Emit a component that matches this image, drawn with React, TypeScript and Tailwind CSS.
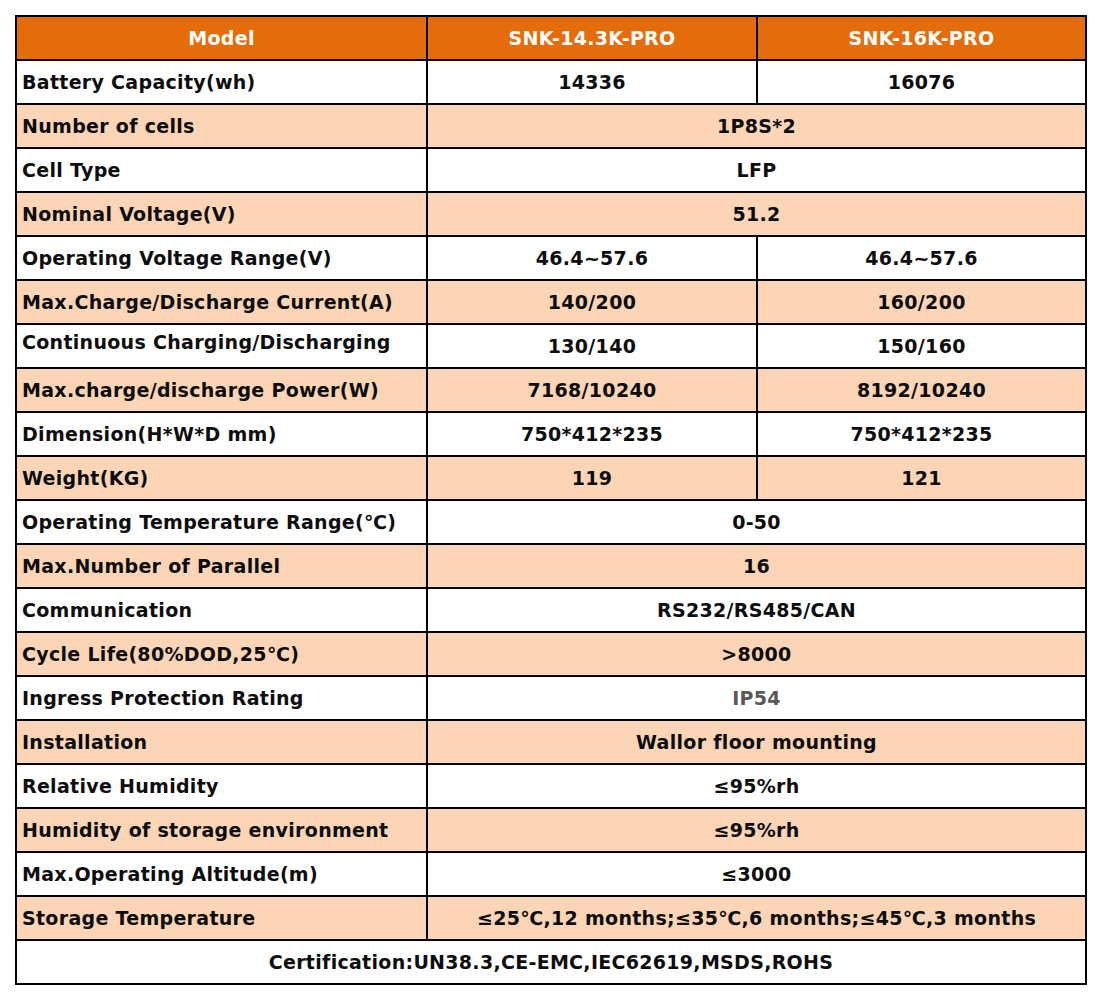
type SpecRow = {
  readonly label: string;
  readonly values: readonly string[];
  readonly muted?: boolean;
  readonly raised?: boolean;
};

const ROWS: readonly SpecRow[] = [
  { label: "Battery Capacity(wh)", values: ["14336", "16076"] },
  { label: "Number of cells", values: ["1P8S*2"] },
  { label: "Cell Type", values: ["LFP"] },
  { label: "Nominal Voltage(V)", values: ["51.2"] },
  { label: "Operating Voltage Range(V)", values: ["46.4~57.6", "46.4~57.6"] },
  { label: "Max.Charge/Discharge Current(A)", values: ["140/200", "160/200"] },
  { label: "Continuous Charging/Discharging", values: ["130/140", "150/160"], raised: true },
  { label: "Max.charge/discharge Power(W)", values: ["7168/10240", "8192/10240"] },
  { label: "Dimension(H*W*D mm)", values: ["750*412*235", "750*412*235"] },
  { label: "Weight(KG)", values: ["119", "121"] },
  { label: "Operating Temperature Range(℃)", values: ["0-50"] },
  { label: "Max.Number of Parallel", values: ["16"] },
  { label: "Communication", values: ["RS232/RS485/CAN"] },
  { label: "Cycle Life(80%DOD,25℃)", values: [">8000"] },
  { label: "Ingress Protection Rating", values: ["IP54"], muted: true },
  { label: "Installation", values: ["Wallor floor mounting"] },
  { label: "Relative Humidity", values: ["≤95%rh"] },
  { label: "Humidity of storage environment", values: ["≤95%rh"] },
  { label: "Max.Operating Altitude(m)", values: ["≤3000"] },
  { label: "Storage Temperature", values: ["≤25℃,12 months;≤35℃,6 months;≤45℃,3 months"] },
];

export default function App() {
  return (
    <div className="min-h-[1000px] bg-white pl-[15px] pt-[15px] font-['DejaVu_Sans','Noto_Sans',sans-serif] text-[19px] font-bold tracking-[0.3px] text-[#0d0d0d]">
      <div className="grid w-max grid-cols-[409px_328px_327px] gap-[2px] bg-black p-[2px]">
        <div className="flex h-[42px] items-center justify-center bg-[#e46c0a] text-white">Model</div>
        <div className="flex h-[42px] items-center justify-center bg-[#e46c0a] text-white">SNK-14.3K-PRO</div>
        <div className="flex h-[42px] items-center justify-center bg-[#e46c0a] text-white">SNK-16K-PRO</div>

        {ROWS.map((row, i) => {
          const bg = i % 2 === 1 ? "bg-[#fbd5b5]" : "bg-white";
          return (
            <div key={row.label} className="contents">
              <div className={`flex h-[42px] items-center pl-[5px] ${bg} ${row.raised ? "pb-[8px]" : ""}`}>
                {row.label}
              </div>
              {row.values.length === 1 ? (
                <div
                  className={`col-span-2 flex h-[42px] items-center justify-center ${bg} ${row.muted ? "text-[#595959]" : ""}`}
                >
                  {row.values[0]}
                </div>
              ) : (
                row.values.map((v, j) => (
                  <div key={j} className={`flex h-[42px] items-center justify-center ${bg}`}>
                    {v}
                  </div>
                ))
              )}
            </div>
          );
        })}

        <div className="col-span-3 flex h-[42px] items-center justify-center bg-white">
          Certification:UN38.3,CE-EMC,IEC62619,MSDS,ROHS
        </div>
      </div>
    </div>
  );
}
